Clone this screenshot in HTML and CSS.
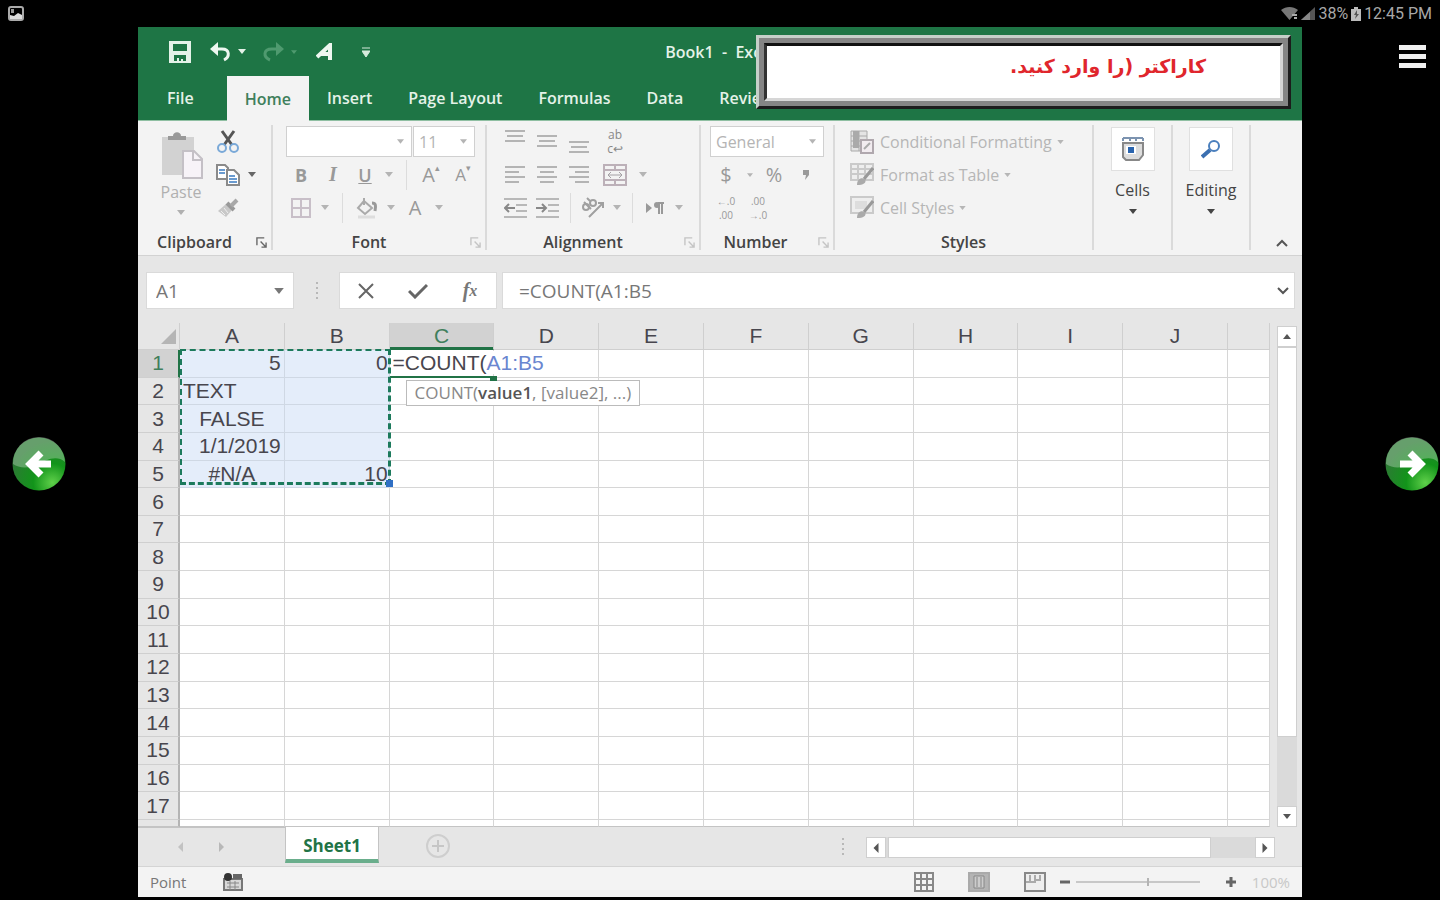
FILE: index.html
```html
<!DOCTYPE html>
<html lang="en">
<head>
    <meta charset="UTF-8">
    <meta name="viewport" content="width=device-width, initial-scale=1.0">
    <title>Book1 - Excel</title>
    <link rel="stylesheet" href="styles.css">
</head>
<body>
    <!-- Shared icons -->
    <svg class="sprite" aria-hidden="true">
        <symbol id="caret" viewBox="0 0 8 5"><path d="M0 0h8L4 5z" fill="currentColor"/></symbol>
        <symbol id="launcher" viewBox="0 0 12 12"><path d="M1 9V1h8M5 5l5 5M11 6v5H6" fill="none" stroke="currentColor" stroke-width="1.5"/></symbol>
        <symbol id="ball" viewBox="0 0 54 54">
            <circle cx="27" cy="27" r="26.500" fill="url(#ballFill)"/>
            <path d="M1 27A26 26 0 0 1 53 25C44 17 33 24 27 27C18 31 8 32 1 27z" fill="#fff" opacity=".28"/>
        </symbol>
    </svg>
    <svg class="sprite" aria-hidden="true">
        <radialGradient id="ballFill" cx=".75" cy=".85" r=".8">
            <stop offset="0" stop-color="#5fd04a"/>
            <stop offset=".45" stop-color="#12941a"/>
            <stop offset="1" stop-color="#2c7a34"/>
        </radialGradient>
    </svg>

    <header class="device-bar">
        <svg width="16" height="16" viewBox="0 0 16 16"><rect x="1" y="1" width="14" height="13" rx="2" fill="none" stroke="#aaa" stroke-width="2"/><path d="M2 13V9l4 1 4-3 4 2v4z" fill="#ddd"/><path d="M3 3h3v4H3z" fill="#999"/></svg>
        <div class="device-info">
            <svg width="17" height="13" viewBox="0 0 17 13"><path d="M0 3C5-1 12-1 17 3L8.500 13z" fill="#777"/><path d="M11 8h5M13 11h3" stroke="#aaa" stroke-width="2"/></svg>
            <svg width="14" height="13" viewBox="0 0 14 13"><path d="M14 0v13H0z" fill="#555"/><path d="M9 5v8H0z" fill="#888"/></svg>
            <span>38%</span>
            <svg width="10" height="14" viewBox="0 0 10 14"><path d="M3 0h4v2h3v12H0V2h3z" fill="#bbb"/><path d="M6 3L3 8h2l-1 4 4-5H6z" fill="#555"/></svg>
            <span class="clock">12:45 PM</span>
        </div>
    </header>

    <main class="stage">
        <div class="side side-left">
            <button class="nav" aria-label="Previous">
                <svg width="54" height="54" viewBox="0 0 54 54"><use href="#ball"/><path d="M39 27H19M29 16L18 27l11 11" fill="none" stroke="#fff" stroke-width="7"/></svg>
            </button>
        </div>

        <div class="app">
            <div class="titlebar">
                <div class="quick">
                    <button class="q-btn" aria-label="Save"><svg width="22" height="22" viewBox="0 0 22 22"><path d="M0 0h22v22H0zM4 3v7h14V3zM5 14v6h3v-3h2v3h2v-2h2v2h3v-6z" fill="#e4f2e8" fill-rule="evenodd"/></svg></button>
                    <button class="q-btn" aria-label="Undo"><svg width="22" height="20" viewBox="0 0 22 20"><path d="M5 7h7c8 0 8 8 2 11" fill="none" stroke="#eef7f0" stroke-width="3"/><path d="M0 7l8-7v14z" fill="#eef7f0"/></svg></button>
                    <button class="q-arrow" aria-label="Undo list"><svg width="8" height="5"><use href="#caret"/></svg></button>
                    <button class="q-btn dim" aria-label="Redo"><svg width="22" height="20" viewBox="0 0 22 20"><path d="M17 7h-7C1 7 1 15 8 18" fill="none" stroke="currentColor" stroke-width="3"/><path d="M22 7l-8-7v14z" fill="currentColor"/></svg></button>
                    <button class="q-arrow dim" aria-label="Redo list"><svg width="6" height="4"><use href="#caret"/></svg></button>
                    <button class="q-btn" aria-label="Font style"><svg width="18" height="18" viewBox="0 0 18 18"><path d="M1 14L14 2v15M5 11h9" fill="none" stroke="#eef7f0" stroke-width="4"/></svg></button>
                    <button class="q-btn" aria-label="Customize toolbar"><svg width="8" height="10" viewBox="0 0 8 10"><path d="M0 1h8M0 4h8L4 10z" fill="#d6ebdc" stroke="#d6ebdc"/></svg></button>
                </div>
                <span class="doc-title">Book1 &nbsp;- &nbsp;Excel</span>
            </div>

            <nav class="tabs">
                <a href="#" class="tab tab-file">File</a>
                <a href="#" class="tab active">Home</a>
                <a href="#" class="tab">Insert</a>
                <a href="#" class="tab">Page Layout</a>
                <a href="#" class="tab">Formulas</a>
                <a href="#" class="tab">Data</a>
                <a href="#" class="tab">Review</a>
            </nav>

            <section class="ribbon">
                <!-- Clipboard -->
                <div class="group">
                    <div class="clip-body">
                        <button class="paste">
                            <svg width="44" height="48" viewBox="0 0 44 48"><path d="M3 6h32v38H3z" fill="#d2d2d2"/><path d="M9 9V5h5c0-5 8-5 8 0h5v4z" fill="#999"/><path d="M24 20h11l8 8v19H24z" fill="#f7f3f8" stroke="#c4c0c6" stroke-width="2"/><path d="M34 20v9h9" fill="none" stroke="#c4c0c6" stroke-width="2"/></svg>
                            <span>Paste</span>
                            <svg width="8" height="5"><use href="#caret"/></svg>
                        </button>
                        <div class="clip-tools">
                            <div class="row"><button class="tool" aria-label="Cut"><svg width="22" height="24" viewBox="0 0 22 24"><path d="M5 1l10 14M17 1L7 15" stroke="#555" stroke-width="3"/><circle cx="5" cy="18" r="4" fill="none" stroke="#7aa9d8" stroke-width="2"/><circle cx="17" cy="18" r="4" fill="none" stroke="#7aa9d8" stroke-width="2"/></svg></button></div>
                            <div class="row"><button class="tool" aria-label="Copy"><svg width="24" height="22" viewBox="0 0 24 22"><path d="M1 1h8l3 3v11H1z" fill="#fff" stroke="#8a8a8a" stroke-width="2"/><path d="M11 6h7l5 5v10H11z" fill="#fff" stroke="#8a8a8a" stroke-width="2"/><path d="M3 6h6M3 9h6M13 12h6M13 15h8M13 18h8" stroke="#6a9bd0" stroke-width="2"/></svg></button><button class="drop dark" aria-label="Copy options"><svg width="8" height="5"><use href="#caret"/></svg></button></div>
                            <div class="row"><button class="tool" aria-label="Format painter"><svg width="22" height="20" viewBox="0 0 22 20"><path d="M1 13l8-7 6 6-6 7z" fill="#c8c8c8"/><path d="M10 5l7 7" stroke="#999" stroke-width="4"/><path d="M14 8l6-6" stroke="#a8a8a8" stroke-width="4"/><path d="M4 13l4 4M7 10l4 5" stroke="#eee"/></svg></button></div>
                        </div>
                    </div>
                    <div class="caption"><span>Clipboard</span><button class="launch dark" aria-label="Clipboard settings"><svg width="11" height="11"><use href="#launcher"/></svg></button></div>
                </div>

                <!-- Font -->
                <div class="group group-font">
                    <div class="row row-combo">
                        <div class="combo combo-font"><select aria-label="Font name"><option></option></select><svg width="7" height="5"><use href="#caret"/></svg></div>
                        <div class="combo combo-size"><select aria-label="Font size"><option>11</option></select><svg width="7" height="5"><use href="#caret"/></svg></div>
                    </div>
                    <div class="row">
                        <button class="tool glyph bold">B</button>
                        <button class="tool glyph italic">I</button>
                        <button class="tool glyph under">U</button>
                        <button class="drop" aria-label="Underline options"><svg width="8" height="5"><use href="#caret"/></svg></button>
                        <span class="sep"></span>
                        <button class="tool glyph" aria-label="Increase font size">A<sup>&#9652;</sup></button>
                        <button class="tool glyph small" aria-label="Decrease font size">A<sup>&#9662;</sup></button>
                    </div>
                    <div class="row">
                        <button class="tool" aria-label="Borders"><svg width="20" height="20" viewBox="0 0 20 20"><path d="M1 1h18v18H1zM10 1v18M1 10h18" fill="none" stroke="#c8bfc8" stroke-width="2"/></svg></button>
                        <button class="drop" aria-label="Border options"><svg width="8" height="5"><use href="#caret"/></svg></button>
                        <span class="sep"></span>
                        <button class="tool" aria-label="Fill color"><svg width="22" height="22" viewBox="0 0 22 22"><path d="M8 4l8 7-7 6-7-6zM8 8V1" fill="none" stroke="#aaa" stroke-width="2"/><path d="M16 6c4 0 4 3 3 8" fill="none" stroke="#999" stroke-width="3"/><path d="M2 20h17" stroke="#ddd" stroke-width="3"/></svg></button>
                        <button class="drop" aria-label="Fill options"><svg width="8" height="5"><use href="#caret"/></svg></button>
                        <button class="tool glyph" aria-label="Font color">A</button>
                        <button class="drop" aria-label="Font color options"><svg width="8" height="5"><use href="#caret"/></svg></button>
                    </div>
                    <div class="caption"><span>Font</span><button class="launch" aria-label="Font settings"><svg width="11" height="11"><use href="#launcher"/></svg></button></div>
                </div>

                <!-- Alignment -->
                <div class="group">
                    <div class="row">
                        <button class="tool" aria-label="Top align"><svg width="20" height="26" viewBox="0 0 20 26"><path d="M0 2h20M2 7h16M0 12h20" stroke="#b4b4b4" stroke-width="2"/></svg></button>
                        <button class="tool" aria-label="Middle align"><svg width="20" height="26" viewBox="0 0 20 26"><path d="M0 7h20M2 12h16M0 17h20" stroke="#b4b4b4" stroke-width="2"/></svg></button>
                        <button class="tool" aria-label="Bottom align"><svg width="20" height="26" viewBox="0 0 20 26"><path d="M0 13h20M2 18h16M0 23h20" stroke="#b4b4b4" stroke-width="2"/></svg></button>
                        <button class="tool wide wrap" aria-label="Wrap text"><span>ab</span><span>c&#8617;</span></button>
                    </div>
                    <div class="row">
                        <button class="tool" aria-label="Align left"><svg width="20" height="18" viewBox="0 0 20 18"><path d="M0 1h20M0 6h14M0 11h20M0 16h14" stroke="#b4b4b4" stroke-width="2"/></svg></button>
                        <button class="tool" aria-label="Center"><svg width="20" height="18" viewBox="0 0 20 18"><path d="M0 1h20M3 6h14M0 11h20M3 16h14" stroke="#b4b4b4" stroke-width="2"/></svg></button>
                        <button class="tool" aria-label="Align right"><svg width="20" height="18" viewBox="0 0 20 18"><path d="M0 1h20M6 6h14M0 11h20M6 16h14" stroke="#b4b4b4" stroke-width="2"/></svg></button>
                        <button class="tool wide" aria-label="Merge"><svg width="24" height="22" viewBox="0 0 24 22"><path d="M1 1h22v20H1zM1 6h22M1 16h22M12 1v5M12 16v5" fill="none" stroke="#bcb0b8" stroke-width="2"/><path d="M5 11h14M8 8l-3 3 3 3M16 8l3 3-3 3" fill="none" stroke="#a4a0a4"/></svg></button>
                        <button class="drop" aria-label="Merge options"><svg width="8" height="5"><use href="#caret"/></svg></button>
                    </div>
                    <div class="row">
                        <button class="tool" aria-label="Decrease indent"><svg width="23" height="20" viewBox="0 0 23 20"><path d="M0 1h23M12 7h11M12 13h11M0 19h23" stroke="#b8b8b8" stroke-width="2"/><path d="M1 10h10M5 6l-4 4 4 4" fill="none" stroke="#888" stroke-width="2"/></svg></button>
                        <button class="tool" aria-label="Increase indent"><svg width="23" height="20" viewBox="0 0 23 20"><path d="M0 1h23M12 7h11M12 13h11M0 19h23" stroke="#b8b8b8" stroke-width="2"/><path d="M0 10h10M6 6l4 4-4 4" fill="none" stroke="#888" stroke-width="2"/></svg></button>
                        <span class="sep"></span>
                        <button class="tool" aria-label="Orientation"><svg width="24" height="22" viewBox="0 0 24 22"><g fill="none" stroke="#a0a0a0" stroke-width="2"><circle cx="5" cy="10" r="3"/><path d="M3 5l7 7"/><circle cx="12" cy="6" r="3"/><path d="M6 1l3 3M8 20L22 6M17 6h5v5"/></g></svg></button>
                        <button class="drop" aria-label="Orientation options"><svg width="8" height="5"><use href="#caret"/></svg></button>
                        <span class="sep"></span>
                        <button class="tool" aria-label="Text direction"><svg width="18" height="12" viewBox="0 0 18 12"><path d="M0 1l6 5-6 5z" fill="#999"/><path d="M18 1h-6M13 1v11M16 1v11" stroke="#999" stroke-width="2"/><circle cx="11" cy="3" r="3" fill="#999"/></svg></button>
                        <button class="drop" aria-label="Direction options"><svg width="8" height="5"><use href="#caret"/></svg></button>
                    </div>
                    <div class="caption"><span>Alignment</span><button class="launch" aria-label="Alignment settings"><svg width="11" height="11"><use href="#launcher"/></svg></button></div>
                </div>

                <!-- Number -->
                <div class="group group-number">
                    <div class="row row-combo">
                        <div class="combo combo-number"><select aria-label="Number format"><option>General</option></select><svg width="7" height="5"><use href="#caret"/></svg></div>
                    </div>
                    <div class="row">
                        <button class="tool glyph">$</button>
                        <button class="drop" aria-label="Currency options"><svg width="6" height="4"><use href="#caret"/></svg></button>
                        <button class="tool glyph">%</button>
                        <button class="tool" aria-label="Comma style"><svg width="6" height="10" viewBox="0 0 6 10"><path d="M0 0h6v5L2 10 3 5H0z" fill="#999"/></svg></button>
                    </div>
                    <div class="row">
                        <button class="tool decimals" aria-label="Increase decimal"><span>&#8592;.0</span><span>.00</span></button>
                        <button class="tool decimals" aria-label="Decrease decimal"><span>.00</span><span>&#8594;.0</span></button>
                    </div>
                    <div class="caption"><span>Number</span><button class="launch" aria-label="Number settings"><svg width="11" height="11"><use href="#launcher"/></svg></button></div>
                </div>

                <!-- Styles -->
                <div class="group">
                    <div class="row"><button class="style-btn"><svg width="24" height="24" viewBox="0 0 24 24"><path d="M1 1h16v20H1z" fill="#e4e4e4" stroke="#aaa"/><path d="M1 6h16M1 11h16M1 16h16M9 1v20" stroke="#aaa"/><path d="M3 1h6v17H3z" fill="#aaa"/><path d="M11 10h12v13H11z" fill="#f2ecf0" stroke="#b0a8ae" stroke-width="2"/><path d="M14 19l6-6" stroke="#aaa" stroke-width="2"/></svg>Conditional Formatting<svg width="7" height="4"><use href="#caret"/></svg></button></div>
                    <div class="row"><button class="style-btn"><svg width="24" height="24" viewBox="0 0 24 24"><path d="M1 1h22v16H1zM1 6h22M1 11h22M8 1v16M15 1v16" fill="#eee" stroke="#cacaca" stroke-width="2"/><path d="M23 5l-9 11" stroke="#999" stroke-width="3"/><path d="M7 22c0-6 4-8 8-6 2 4-2 6-8 6z" fill="#aaa"/></svg>Format as Table<svg width="7" height="4"><use href="#caret"/></svg></button></div>
                    <div class="row"><button class="style-btn"><svg width="24" height="24" viewBox="0 0 24 24"><path d="M1 1h22v16H1z" fill="#eee" stroke="#cacaca" stroke-width="2"/><path d="M5 5h12v8H5z" fill="#ddd"/><path d="M23 5l-9 11" stroke="#999" stroke-width="3"/><path d="M7 22c0-6 4-8 8-6 2 4-2 6-8 6z" fill="#aaa"/></svg>Cell Styles<svg width="7" height="4"><use href="#caret"/></svg></button></div>
                    <div class="caption"><span>Styles</span></div>
                </div>

                <!-- Collapsed groups -->
                <div class="group">
                    <button class="big">
                        <span class="tile"><svg width="24" height="26" viewBox="0 0 24 26"><path d="M2 2h20M2 2v3M9 2v3M15 2v3M22 2v3" stroke="#7c93b0" stroke-width="2" fill="none"/><path d="M2 7h20v12l-4 5H5l-3-3z" fill="#ddd" stroke="#888" stroke-width="2"/><path d="M5 10h10v8H5z" fill="#fff"/><path d="M7 11h6v6H7z" fill="#2a64ae"/></svg></span>
                        Cells
                        <svg width="8" height="5"><use href="#caret"/></svg>
                    </button>
                </div>
                <div class="group">
                    <button class="big">
                        <span class="tile"><svg width="20" height="20" viewBox="0 0 20 20"><circle cx="13" cy="7" r="5" fill="none" stroke="#4a7fbd" stroke-width="2"/><path d="M9 11l-8 7" stroke="#3b6fb0" stroke-width="4"/></svg></span>
                        Editing
                        <svg width="8" height="5"><use href="#caret"/></svg>
                    </button>
                </div>
                <div class="group group-last">
                    <button class="collapse" aria-label="Collapse ribbon"><svg width="12" height="8" viewBox="0 0 12 8"><path d="M1 7l5-5 5 5" fill="none" stroke="#555" stroke-width="2"/></svg></button>
                </div>
            </section>

            <section class="formula-bar">
                <div class="name-box"><input type="text" value="A1" aria-label="Name box"><button aria-label="Name list"><svg width="10" height="6"><use href="#caret"/></svg></button></div>
                <span class="dots"><i></i><i></i><i></i><i></i></span>
                <div class="fx-box">
                    <button aria-label="Cancel"><svg width="18" height="16" viewBox="0 0 18 16"><path d="M2 1l14 14M16 1L2 15" stroke="#666" stroke-width="2"/></svg></button>
                    <button aria-label="Enter"><svg width="20" height="16" viewBox="0 0 20 16"><path d="M1 8l6 6L19 2" fill="none" stroke="#666" stroke-width="3"/></svg></button>
                    <button class="fx" aria-label="Insert function">f<small>x</small></button>
                </div>
                <div class="formula"><input type="text" value="=COUNT(A1:B5" aria-label="Formula"><button aria-label="Expand"><svg width="12" height="8" viewBox="0 0 12 8"><path d="M1 1l5 5 5-5" fill="none" stroke="#555" stroke-width="2"/></svg></button></div>
            </section>

            <section class="sheet">
                <div class="grid-wrap">
                    <table class="cells">
                        <thead>
                            <tr><th class="corner"><svg width="15" height="15" viewBox="0 0 15 15"><path d="M15 0v15H0z" fill="#b5b5b5"/></svg></th><th>A</th><th>B</th><th class="current">C</th><th>D</th><th>E</th><th>F</th><th>G</th><th>H</th><th>I</th><th>J</th><th class="edge"></th></tr>
                        </thead>
                        <tbody>
                            <tr>
                                <th class="current">1</th>
                                <td class="num picked anchor">5<span class="ants"></span></td>
                                <td class="num tight picked">0</td>
                                <td class="editing"><span class="edit-text">=COUNT(<b>A1:B5</b></span><span class="tip">COUNT(<b>value1</b>, [value2], ...)</span></td>
                                <td></td><td></td><td></td><td></td><td></td><td></td><td></td><td></td>
                            </tr>
                            <tr><th>2</th><td class="picked">TEXT</td><td class="picked"></td><td></td><td></td><td></td><td></td><td></td><td></td><td></td><td></td><td></td></tr>
                            <tr><th>3</th><td class="mid picked">FALSE</td><td class="picked"></td><td></td><td></td><td></td><td></td><td></td><td></td><td></td><td></td><td></td></tr>
                            <tr><th>4</th><td class="num picked">1/1/2019</td><td class="picked"></td><td></td><td></td><td></td><td></td><td></td><td></td><td></td><td></td><td></td></tr>
                            <tr><th>5</th><td class="mid picked">#N/A</td><td class="num tight picked">10</td><td></td><td></td><td></td><td></td><td></td><td></td><td></td><td></td><td></td></tr>
                            <tr><th>6</th><td></td><td></td><td></td><td></td><td></td><td></td><td></td><td></td><td></td><td></td><td></td></tr>
                            <tr><th>7</th><td></td><td></td><td></td><td></td><td></td><td></td><td></td><td></td><td></td><td></td><td></td></tr>
                            <tr><th>8</th><td></td><td></td><td></td><td></td><td></td><td></td><td></td><td></td><td></td><td></td><td></td></tr>
                            <tr><th>9</th><td></td><td></td><td></td><td></td><td></td><td></td><td></td><td></td><td></td><td></td><td></td></tr>
                            <tr><th>10</th><td></td><td></td><td></td><td></td><td></td><td></td><td></td><td></td><td></td><td></td><td></td></tr>
                            <tr><th>11</th><td></td><td></td><td></td><td></td><td></td><td></td><td></td><td></td><td></td><td></td><td></td></tr>
                            <tr><th>12</th><td></td><td></td><td></td><td></td><td></td><td></td><td></td><td></td><td></td><td></td><td></td></tr>
                            <tr><th>13</th><td></td><td></td><td></td><td></td><td></td><td></td><td></td><td></td><td></td><td></td><td></td></tr>
                            <tr><th>14</th><td></td><td></td><td></td><td></td><td></td><td></td><td></td><td></td><td></td><td></td><td></td></tr>
                            <tr><th>15</th><td></td><td></td><td></td><td></td><td></td><td></td><td></td><td></td><td></td><td></td><td></td></tr>
                            <tr><th>16</th><td></td><td></td><td></td><td></td><td></td><td></td><td></td><td></td><td></td><td></td><td></td></tr>
                            <tr><th>17</th><td></td><td></td><td></td><td></td><td></td><td></td><td></td><td></td><td></td><td></td><td></td></tr>
                            <tr class="cut"><th></th><td></td><td></td><td></td><td></td><td></td><td></td><td></td><td></td><td></td><td></td><td></td></tr>
                        </tbody>
                    </table>
                </div>
                <div class="vscroll">
                    <button class="sb up" aria-label="Scroll up"><svg width="8" height="5"><use href="#caret"/></svg></button>
                    <div class="vtrack"><div class="vthumb"></div></div>
                    <button class="sb" aria-label="Scroll down"><svg width="8" height="5"><use href="#caret"/></svg></button>
                </div>
            </section>

            <section class="sheet-tabs">
                <div class="sheet-nav">
                    <button aria-label="Previous sheet"><svg width="5" height="10" viewBox="0 0 5 10"><path d="M5 0v10L0 5z" fill="#c2c2c2"/></svg></button>
                    <button aria-label="Next sheet"><svg width="5" height="10" viewBox="0 0 5 10"><path d="M0 0v10l5-5z" fill="#b8b8b8"/></svg></button>
                </div>
                <button class="sheet-tab">Sheet1</button>
                <button class="add" aria-label="New sheet"><svg width="24" height="24" viewBox="0 0 24 24"><circle cx="12" cy="12" r="11" fill="none" stroke="#cecece" stroke-width="2"/><path d="M12 6v12M6 12h12" stroke="#c6c6c6" stroke-width="2"/></svg></button>
                <span class="dots"><i></i><i></i><i></i><i></i></span>
                <div class="hscroll">
                    <button class="sb" aria-label="Scroll left"><svg width="6" height="10" viewBox="0 0 5 10"><path d="M5 0v10L0 5z" fill="#555"/></svg></button>
                    <div class="htrack"><div class="hthumb"></div></div>
                    <button class="sb" aria-label="Scroll right"><svg width="6" height="10" viewBox="0 0 5 10"><path d="M0 0v10l5-5z" fill="#555"/></svg></button>
                </div>
            </section>

            <footer class="status">
                <span class="mode">Point</span>
                <button aria-label="Record macro"><svg width="20" height="18" viewBox="0 0 20 18"><path d="M1 6h18v11H1z" fill="#d8d8d8" stroke="#777" stroke-width="2"/><path d="M10 1h9v5h-9z" fill="#666"/><path d="M4 10h12M4 14h12M7 8v9M12 8v9" stroke="#888"/><circle cx="5" cy="4" r="4" fill="#333"/></svg></button>
                <div class="views">
                    <button aria-label="Normal view"><svg width="20" height="20" viewBox="0 0 20 20"><path d="M1 1h18v18H1zM7 1v18M13 1v18M1 7h18M1 13h18" fill="none" stroke="#888" stroke-width="2"/></svg></button>
                    <button aria-label="Page layout view"><svg width="22" height="20" viewBox="0 0 22 20"><path d="M1 1h20v18H1z" fill="#b4b4b4" stroke="#aaa" stroke-width="2"/><path d="M6 4h10v12H6z" fill="#ccc" stroke="#888"/><path d="M9 5v10M13 5v10" stroke="#888"/></svg></button>
                    <button aria-label="Page break view"><svg width="22" height="20" viewBox="0 0 22 20"><path d="M1 1h20v18H1z" fill="#eee" stroke="#888" stroke-width="2"/><path d="M6 3v7H2M11 3v7H7M16 3v5h-5" fill="none" stroke="#aaa" stroke-width="2"/></svg></button>
                </div>
                <div class="zoom">
                    <button aria-label="Zoom out"><svg width="10" height="10" viewBox="0 0 10 10"><path d="M0 5h10" stroke="#666" stroke-width="3"/></svg></button>
                    <input type="range" min="0" max="100" value="58" aria-label="Zoom">
                    <button aria-label="Zoom in"><svg width="10" height="10" viewBox="0 0 10 10"><path d="M0 5h10M5 0v10" stroke="#666" stroke-width="3"/></svg></button>
                    <span>100%</span>
                </div>
            </footer>

            <!-- Instruction box, floats over the title bar -->
            <div class="hint">
                <p class="hint-text" lang="fa" dir="rtl">کاراکتر (را وارد کنید.</p>
            </div>
        </div>

        <div class="side side-right">
            <button class="menu" aria-label="Menu"><i></i><i></i><i></i></button>
            <button class="nav" aria-label="Next">
                <svg width="54" height="54" viewBox="0 0 54 54"><use href="#ball"/><path d="M15 27h20M25 16l11 11-11 11" fill="none" stroke="#fff" stroke-width="7"/></svg>
            </button>
        </div>
    </main>
</body>
</html>
```
FILE: styles.css
```css
* {
    box-sizing: border-box;
}

body {
    margin: 0;
    height: 100vh;
    display: flex;
    flex-direction: column;
    background: #000;
    font-family: "Open Sans", "Noto Sans", sans-serif;
    font-size: 16px;
    color: #444;
}

button {
    display: flex;
    align-items: center;
    justify-content: center;
    padding: 0;
    border: none;
    background: none;
    font: inherit;
    color: inherit;
    cursor: pointer;
}

input, select {
    min-width: 0;
    border: none;
    background: none;
    padding: 0;
    font: inherit;
    color: inherit;
    outline: none;
}

svg {
    display: block;
    flex: none;
}

.sprite {
    position: absolute;
    width: 0;
    height: 0;
}

/* Tablet status bar */
.device-bar {
    height: 27px;
    padding: 0 8px;
    display: flex;
    align-items: center;
    justify-content: space-between;
    font-family: Roboto, sans-serif;
    color: #a8a8a8;
}

.device-info {
    display: flex;
    align-items: center;
    gap: 3px;
}

/* Three columns: back, app, next */
.stage {
    flex: 1;
    min-height: 0;
    display: grid;
    grid-template-columns: 138px 1fr 138px;
}

.side {
    display: grid;
    grid-template-rows: 1fr auto 1fr;
}

.side-left {
    padding-left: 12px;
    justify-items: start;
}

.side-right {
    padding-right: 1px;
    justify-items: end;
}

.nav {
    grid-row: 2;
}

.menu {
    grid-row: 1;
    align-self: start;
    flex-direction: column;
    gap: 4px;
    margin: 18px 13px 0 0;
}

.menu i {
    width: 27px;
    height: 5px;
    background: #f0f0f0;
}

.app {
    position: relative;
    display: flex;
    flex-direction: column;
    margin-bottom: 3px;
    min-width: 0;
    background: #e6e6e6;
}

/* Title bar */
.titlebar {
    height: 49px;
    display: grid;
    grid-template-columns: 1fr auto 1fr;
    align-items: center;
    background: #1e7545;
    color: #e4f2e8;
}

.quick {
    display: flex;
    align-items: center;
    padding-left: 24px;
}

.q-btn {
    width: 36px;
    height: 32px;
    margin-right: 5px;
}

.q-arrow {
    width: 12px;
    height: 32px;
    margin: 0 7px 0 -8px;
}

.dim {
    color: #4f9a6f;
}

.doc-title {
    font-weight: 600;
}

.tabs {
    height: 45px;
    display: flex;
    align-items: stretch;
    background: #1e7545;
    border-bottom: 1px solid #8fbfa2;
}

.tab {
    display: flex;
    align-items: center;
    padding: 0 18px;
    color: #e4f2e8;
    font-weight: 600;
    text-decoration: none;
}

.tab-file {
    padding: 0 33px 0 29px;
}

.tab.active {
    margin-bottom: -1px;
    background: #f3f3f3;
    color: #3f7f5c;
}

/* Ribbon */
.ribbon {
    height: 135px;
    display: grid;
    grid-template-columns: 135fr 214fr 214fr 134fr 259fr 79fr 78fr 51fr;
    background: #f3f3f3;
    border-bottom: 1px solid #d2d2d2;
}

.group {
    min-width: 0;
    display: flex;
    flex-direction: column;
    margin: 4px 0 5px;
    padding-left: 12px;
    border-right: 2px solid #dadada;
}

.group-number {
    padding-left: 9px;
}

.group-last {
    border: none;
    align-items: flex-start;
    justify-content: flex-end;
    padding: 0 0 3px 25px;
}

.row {
    height: 33px;
    display: flex;
    align-items: center;
}

.row-combo {
    gap: 1px;
}

.caption {
    flex: 1;
    display: flex;
    align-items: flex-end;
    margin-left: -12px;
    line-height: 16px;
    font-weight: 600;
    color: #444;
}

.caption span {
    flex: 1;
    text-align: center;
}

.launch {
    width: 20px;
    height: 16px;
    color: #c4c4c4;
}

.launch.dark, .drop.dark {
    color: #666;
}

.clip-body {
    display: flex;
}

.paste {
    width: 62px;
    flex-direction: column;
    justify-content: flex-start;
    padding-top: 6px;
    line-height: 26px;
    color: #b0b0b0;
}

.paste svg:last-child {
    margin-top: 5px;
}

.tool {
    width: 32px;
    height: 30px;
    flex: none;
}

.tool.wide {
    width: 40px;
}

.drop {
    width: 16px;
    height: 30px;
    color: #b4b4b4;
}

.sep {
    width: 14px;
    height: 30px;
    background: linear-gradient(#dcdcdc, #dcdcdc) center / 1px 100% no-repeat;
}

.group-font .sep {
    width: 18px;
}

.glyph {
    font-size: 20px;
    color: #999;
}

.glyph.small {
    font-size: 17px;
}

.glyph sup {
    font-size: 9px;
    line-height: 9px;
    align-self: flex-start;
    padding-top: 3px;
}

.bold {
    font-size: 18px;
    font-weight: 700;
}

.italic {
    font-family: "Liberation Serif", serif;
    font-style: italic;
    font-weight: 700;
}

.under {
    font-size: 18px;
    font-weight: 600;
    text-decoration: underline;
}

.wrap, .decimals {
    flex-direction: column;
    font-size: 12px;
    line-height: 14px;
    color: #888;
}

.decimals {
    font-size: 10px;
    color: #999;
}

.combo {
    height: 31px;
    display: flex;
    align-items: center;
    padding: 0 7px 0 5px;
    background: #fff;
    border: 1px solid #d0d0d0;
    color: #b4b4b4;
}

.combo select {
    flex: 1;
    appearance: none;
}

.combo-font {
    width: 126px;
    margin-left: 1px;
}

.combo-size {
    width: 62px;
}

.combo-number {
    width: 114px;
}

.style-btn {
    gap: 6px;
    padding-left: 3px;
    color: #b6b6b6;
}

.style-btn svg:last-child {
    margin-left: -1px;
}

.big {
    flex-direction: column;
    align-self: center;
    margin-left: -12px;
    padding-top: 2px;
    line-height: 30px;
    color: #444;
    gap: 4px;
}

.tile {
    width: 44px;
    height: 44px;
    display: flex;
    align-items: center;
    justify-content: center;
    background: #fff;
    border: 1px solid #e0e0e0;
}

/* Formula bar */
.formula-bar {
    height: 67px;
    padding: 16px 7px 14px 8px;
    display: flex;
    font-size: 19px;
    color: #777;
}

.name-box, .fx-box, .formula {
    display: flex;
    align-items: center;
    background: #fff;
    border: 1px solid #dadada;
}

.name-box {
    width: 148px;
    padding: 0 9px;
}

.name-box input, .formula input {
    flex: 1;
}

.dots {
    width: 45px;
    display: flex;
    flex-direction: column;
    align-items: center;
    justify-content: center;
    gap: 3px;
}

.dots i {
    width: 2px;
    height: 2px;
    background: #b8b8b8;
}

.fx-box {
    width: 158px;
    margin-right: 5px;
}

.fx-box button {
    flex: 1;
}

.fx {
    font-family: "Liberation Serif", serif;
    font-style: italic;
    font-weight: 700;
    font-size: 20px;
}

.fx small {
    font-size: 16px;
}

.formula {
    flex: 1;
    padding: 0 5px 0 16px;
}

/* Sheet */
.sheet {
    flex: 1;
    min-height: 0;
    display: flex;
}

.grid-wrap {
    flex: 1;
    min-width: 0;
    overflow: hidden;
}

.cells {
    width: 100%;
    height: 100%;
    table-layout: fixed;
    border-collapse: separate;
    border-spacing: 0;
    font-family: "Liberation Sans", Arial, sans-serif;
    font-size: 21px;
    line-height: 24px;
    color: #48464e;
}

.cells th {
    padding: 0;
    font-weight: 400;
    background: #e6e6e6;
    border-right: 1px solid #cfcfcf;
    border-bottom: 1px solid #cfcfcf;
}

.cells thead th {
    height: 27px;
}

.cells thead .current {
    background: #d2d2d2;
    border-bottom-color: #217346;
    box-shadow: inset 0 -2px #217346;
    color: #3f7f5c;
}

.cells tbody .current {
    background: #d2d2d2;
    color: #3f7f5c;
}

.cells tbody th {
    border-right: 2px solid #b4b4b4;
}

.cells tbody th.current {
    border-right: 2px solid #217346;
}

.corner, .edge {
    width: 42px;
}

.corner svg {
    margin: 0 3px 0 auto;
}

.cells td {
    position: relative;
    padding: 0 3px;
    background: #fff;
    border-right: 1px solid #d6d6d6;
    border-bottom: 1px solid #d6d6d6;
    white-space: nowrap;
}

.cells td.picked {
    background: #e4edfa;
    border-color: #cfd8e4;
}

.cells .num {
    text-align: right;
}

.cells .tight {
    padding-right: 1px;
}

.cells .mid {
    text-align: center;
}

.cells .cut th, .cells .cut td {
    height: 7px;
    border-bottom-color: #c4c4c4;
}

.cells td.anchor {
    z-index: 2;
}

/* Dashed outline round A1:B5 */
.ants {
    position: absolute;
    left: 0;
    top: -1px;
    width: calc(200% + 3px);
    height: calc(500% + 3px);
    border: 3px dashed #1c7a5c;
    border-top-width: 2px;
    border-left-width: 2px;
    pointer-events: none;
}

.ants::after {
    content: "";
    position: absolute;
    right: -5px;
    bottom: -5px;
    width: 7px;
    height: 7px;
    background: #2f6fc4;
}

.cells td.editing {
    z-index: 1;
    border-bottom-color: #217346;
    box-shadow: inset 0 -1px #217346;
}

.editing::after {
    content: "";
    position: absolute;
    right: -4px;
    bottom: -4px;
    width: 7px;
    height: 5px;
    background: #217346;
}

.edit-text {
    position: relative;
    background: #fff;
}

.edit-text b {
    font-weight: 400;
    color: #6a86d0;
}

.tip {
    position: absolute;
    left: 16px;
    top: 100%;
    margin-top: 3px;
    padding: 0 8px;
    background: #fff;
    border: 1px solid #bbb;
    font-family: "Open Sans", "Noto Sans", sans-serif;
    font-size: 17px;
    color: #888;
}

.tip b {
    font-weight: 600;
    color: #555;
}

/* Scroll bars */
.vscroll {
    width: 32px;
    padding: 3px 5px 0 7px;
    display: flex;
    flex-direction: column;
}

.sb {
    flex: none;
    width: 20px;
    height: 21px;
    background: #fff;
    border: 1px solid #cfcfcf;
    color: #555;
}

.up svg {
    transform: rotate(180deg);
}

.vtrack {
    flex: 1;
    background: #dadada;
}

.vthumb {
    height: 85%;
    background: #fff;
    border: 1px solid #cfcfcf;
}

.sheet-tabs {
    height: 40px;
    display: flex;
    align-items: flex-start;
    padding-right: 27px;
    border-bottom: 1px solid #d4d4d4;
}

.sheet-nav {
    width: 147px;
    height: 38px;
    display: flex;
    align-items: center;
    justify-content: center;
    gap: 36px;
    padding-right: 22px;
    border-top: 1px solid #c4c4c4;
}

.sheet-tab {
    width: 94px;
    height: 36px;
    padding-top: 4px;
    background: #fff;
    border: 1px solid #c4c4c4;
    border-top: none;
    border-bottom: 4px solid #6aae8c;
    font-size: 17px;
    font-weight: 700;
    color: #217346;
}

.add {
    height: 38px;
    width: 118px;
}

.sheet-tabs .dots {
    height: 38px;
    margin-left: auto;
}

.hscroll {
    width: 36%;
    height: 21px;
    margin-top: 10px;
    display: flex;
}

.htrack {
    flex: 1;
    padding-left: 2px;
    background: #dadada;
}

.hthumb {
    width: 88%;
    height: 100%;
    background: #fff;
    border: 1px solid #cfcfcf;
}

.status {
    height: 30px;
    display: flex;
    align-items: center;
    padding: 0 12px;
    background: #f3f3f3;
    font-size: 15px;
    color: #777;
}

.mode {
    width: 73px;
}

.views {
    display: flex;
    gap: 34px;
    margin-left: auto;
    margin-right: 14px;
}

.zoom {
    display: flex;
    align-items: center;
    gap: 6px;
    color: #c8c8c8;
}

.zoom span {
    margin-left: 10px;
}

.zoom input {
    width: 124px;
    height: 12px;
    margin: 0 20px 0 0;
    appearance: none;
    background: linear-gradient(#c8c8c8, #c8c8c8) center / 100% 2px no-repeat;
}

.zoom input::-webkit-slider-thumb {
    appearance: none;
    width: 2px;
    height: 8px;
    background: #b4b4b4;
}

/* Instruction box */
.hint {
    position: absolute;
    top: 8px;
    right: 11px;
    width: 46%;
    padding: 5px;
    background: #858585;
    border: 3px solid;
    border-color: #c6cfc9 #1c1c1c #1c1c1c #c6cfc9;
}

.hint-text {
    margin: 0;
    min-height: 58px;
    padding: 6px 74px 0 0;
    background: #fff;
    border: 3px solid;
    border-color: #111 #d6d6d6 #d6d6d6 #333;
    font-family: "DejaVu Sans", sans-serif;
    font-size: 19px;
    font-weight: 700;
    line-height: 28px;
    color: #e0262c;
}
```
